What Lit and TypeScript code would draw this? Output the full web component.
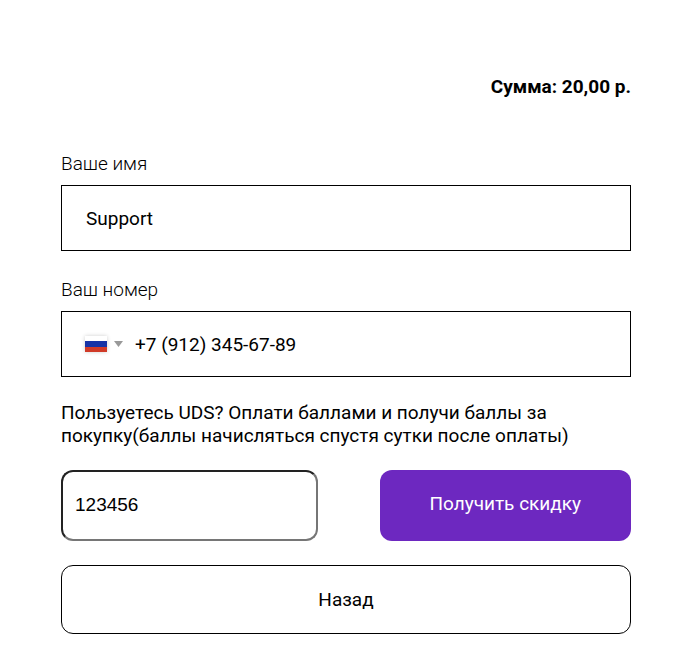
import { LitElement, html, css } from "lit";
import { customElement } from "lit/decorators.js";

@customElement("app-root")
export class AppRoot extends LitElement {
  static styles = css`
    :host {
      display: block;
      box-sizing: border-box;
      min-height: 100vh;
      padding: 75px 65px 34px 61px;
      background: #fff;
      color: #000;
      font-family: Roboto, "Noto Sans", sans-serif;
      font-size: 19px;
      line-height: 23px;
    }
    * {
      box-sizing: border-box;
    }
    .form {
      display: flex;
      flex-direction: column;
      margin: 0;
    }
    .total {
      margin: 0 0 54px;
      text-align: right;
      font-weight: 700;
    }
    .field {
      display: flex;
      flex-direction: column;
      gap: 10px;
      margin-bottom: 27px;
    }
    .label {
      font-weight: 300;
    }
    .box {
      display: flex;
      align-items: center;
      height: 66px;
      padding: 0 24px;
      border: 1px solid #000;
    }
    .input {
      flex: 1;
      min-width: 0;
      height: 100%;
      padding: 0;
      border: 0;
      outline: 0;
      background: none;
      color: inherit;
      font: inherit;
    }
    .country {
      display: flex;
      align-items: center;
      gap: 7px;
      margin: 0 12px 0 -1px;
      padding: 0;
      border: 0;
      background: none;
    }
    .flag {
      width: 22px;
      height: 16px;
      box-shadow: 0 0 4px rgba(0, 0, 0, 0.2);
    }
    .arrow {
      width: 9px;
      height: 6px;
    }
    .note {
      margin: -3px 0 23px;
    }
    .discount {
      display: grid;
      grid-template-columns: 45% 1fr;
      column-gap: 62px;
      margin-bottom: 24px;
    }
    .code {
      width: 100%;
      height: 71px;
      padding: 0 12px 2px;
      border: 2px solid;
      border-color: #222 #767676 #767676 #222;
      border-radius: 12px;
      outline: 0;
      color: inherit;
      font-family: "Liberation Sans", Arial, sans-serif;
      font-size: 19px;
    }
    .button {
      border-radius: 12px;
      font: inherit;
    }
    .apply {
      padding: 0 0 4px;
      border: 0;
      background: #6d28c0;
      color: #fff;
    }
    .back {
      height: 69px;
      padding: 0;
      border: 1px solid #000;
      background: #fff;
      color: #000;
    }
  `;

  render() {
    return html`
      <form class="form" @submit=${(e: Event) => e.preventDefault()}>
        <p class="total">Сумма: 20,00 р.</p>
        <div class="field">
          <label class="label" for="name">Ваше имя</label>
          <div class="box">
            <input class="input" id="name" type="text" value="Support" />
          </div>
        </div>
        <div class="field">
          <label class="label" for="phone">Ваш номер</label>
          <div class="box">
            <button class="country" type="button" aria-label="Код страны">
              <svg class="flag" viewBox="0 0 22 16" aria-hidden="true">
                <rect width="22" height="16" fill="#fff" />
                <rect y="5" width="22" height="6" fill="#1633a6" />
                <rect y="11" width="22" height="5" fill="#d03a27" />
              </svg>
              <svg class="arrow" viewBox="0 0 9 6" aria-hidden="true">
                <path d="M0 0h9L4.500 6z" fill="#999" />
              </svg>
            </button>
            <input class="input" id="phone" type="tel" value="+7 (912) 345-67-89" />
          </div>
        </div>
        <p class="note">
          Пользуетесь UDS? Оплати баллами и получи баллы за
          покупку(баллы начисляться спустя сутки после оплаты)
        </p>
        <div class="discount">
          <input class="code" type="text" aria-label="Код UDS" value="123456" />
          <button class="button apply" type="submit">Получить скидку</button>
        </div>
        <button class="button back" type="button">Назад</button>
      </form>
    `;
  }
}
